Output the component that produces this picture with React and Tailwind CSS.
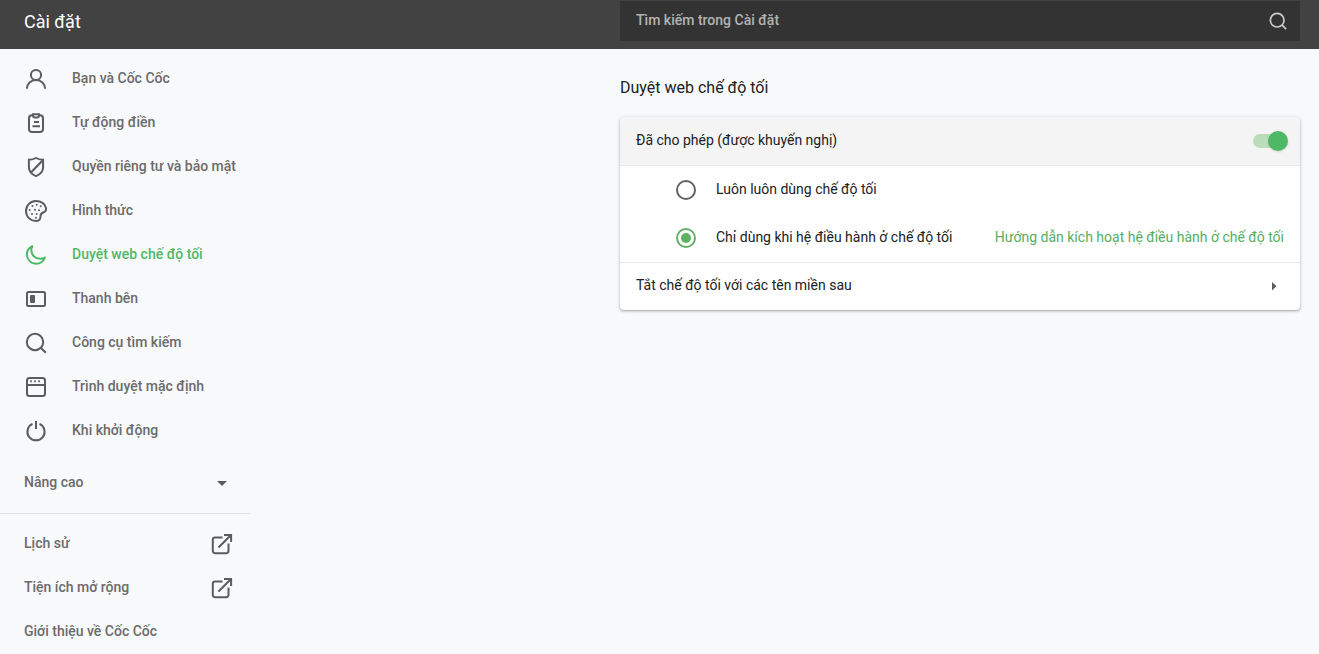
import React, { useState } from 'react';

const Icon = ({ children, size = 24, className = '' }) => (
    <svg
        width={size}
        height={size}
        viewBox="0 0 24 24"
        fill="none"
        stroke="currentColor"
        strokeWidth="2"
        className={`shrink-0 ${className}`}
        aria-hidden="true"
    >
        {children}
    </svg>
);

const UserIcon = () => (
    <Icon>
        <circle cx="12" cy="8" r="5.1" />
        <path d="M2.9 21.8C3 16.5 7 13.1 12 13.1s9 3.4 9.1 8.7" />
    </Icon>
);

const ClipboardIcon = () => (
    <Icon>
        <path d="M8.5 4.2H8a3 3 0 0 0-3 3V18a3 3 0 0 0 3 3h8a3 3 0 0 0 3-3V7.2a3 3 0 0 0-3-3h-.5" />
        <path d="M9 3.2h6v1.3a2 2 0 0 1-2 2h-2a2 2 0 0 1-2-2z" />
        <path d="M10 11h5M8.5 15.2h7.5" />
    </Icon>
);

const ShieldIcon = () => (
    <Icon>
        <path d="M12 3c2 1.2 4.5 1.700 7.100 1.800V12c0 4.300-2.900 7.400-7.100 9.100C7.800 19.400 4.900 16.300 4.900 12V4.800C7.500 4.700 10 4.200 12 3z" />
        <path d="M18.300 5.700 7.200 17.300" />
    </Icon>
);

const PaletteIcon = () => (
    <Icon>
        <path d="M22 8.900c.4 2.300-.8 3.900-2.700 4.600-2.100.8-3 1.800-2.800 3.900.2 2.500-1.300 4.500-4 4.700C6.800 22.400 2 17.900 2 12.100 2 6.400 6.400 2 12 2c5 0 9.200 2.800 10 6.900z" />
        <g fill="currentColor" stroke="none">
            <circle cx="8.5" cy="7" r="1" />
            <circle cx="12.7" cy="5.7" r="1" />
            <circle cx="16.7" cy="7.3" r="1" />
            <circle cx="5.7" cy="11" r="1" />
            <circle cx="11" cy="10.7" r="1" />
            <circle cx="15" cy="11.3" r="1" />
            <circle cx="8" cy="15" r="1" />
            <circle cx="12.7" cy="15" r="1" />
            <circle cx="12" cy="18.7" r="1" />
        </g>
    </Icon>
);

const MoonIcon = () => (
    <Icon>
        <path d="M8.300 3.200C4.800 4.900 2.900 8 2.900 11.600c0 5.100 4 9.200 9.200 9.200 4 0 7.300-2.500 8.800-6.300-1.500.9-3 1.200-4.600 1.200-5.400 0-9-3.700-9-8.600 0-1.400.3-2.700 1-3.900z" strokeLinejoin="round" />
    </Icon>
);

const SidebarIcon = () => (
    <Icon>
        <rect x="3" y="5" width="18" height="14" rx="1.5" />
        <rect x="6" y="8" width="5" height="8" rx="1" fill="currentColor" stroke="none" />
    </Icon>
);

const SearchIcon = ({ size, className }) => (
    <Icon size={size} className={className}>
        <circle cx="11" cy="11" r="8.2" />
        <path d="m17 17 4.800 4.800" />
    </Icon>
);

const BrowserIcon = () => (
    <Icon>
        <rect x="3" y="3" width="18" height="18" rx="2.5" />
        <path d="M3 10h18" />
        <path d="M6.200 6.300h1.600M10.200 6.300h1.600M14.200 6.300h1.600" />
    </Icon>
);

const PowerIcon = () => (
    <Icon>
        <path d="M8.500 4.900a8.600 8.600 0 1 0 7 0" />
        <path d="M12 2v8" />
    </Icon>
);

const ExternalIcon = () => (
    <Icon>
        <path d="M12.500 5.500H5a2.200 2.200 0 0 0-2.200 2.200V19A2.200 2.200 0 0 0 5 21.200h11.300a2.200 2.200 0 0 0 2.200-2.200v-7.500" />
        <path d="M8.500 15.500 21 3M14 2.900h7.100V10" />
    </Icon>
);

const menuItems = [
    { label: 'Bạn và Cốc Cốc', icon: UserIcon },
    { label: 'Tự động điền', icon: ClipboardIcon },
    { label: 'Quyền riêng tư và bảo mật', icon: ShieldIcon },
    { label: 'Hình thức', icon: PaletteIcon },
    { label: 'Duyệt web chế độ tối', icon: MoonIcon },
    { label: 'Thanh bên', icon: SidebarIcon },
    { label: 'Công cụ tìm kiếm', icon: SearchIcon },
    { label: 'Trình duyệt mặc định', icon: BrowserIcon },
    { label: 'Khi khởi động', icon: PowerIcon },
];

const footerItems = [
    { label: 'Lịch sử', external: true },
    { label: 'Tiện ích mở rộng', external: true },
    { label: 'Giới thiệu về Cốc Cốc', external: false },
];

const Header = () => (
    <header className="flex items-start bg-[#424242] text-white">
        <h1 className="flex h-[49px] flex-1 items-center pb-1.5 pl-6 text-lg">Cài đặt</h1>
        <div className="mt-px mr-[19px] flex h-10 w-full max-w-[680px] items-center bg-[#333333] pr-3 pl-4">
            <input
                type="search"
                aria-label="Tìm kiếm trong Cài đặt"
                placeholder="Tìm kiếm trong Cài đặt"
                className="min-w-0 flex-1 bg-transparent pb-0.5 text-sm font-medium outline-none placeholder:text-[#b3b3b3]"
            />
            <button type="button" aria-label="Tìm kiếm" className="text-[#cccccc]">
                <SearchIcon size={20} />
            </button>
        </div>
    </header>
);

const Sidebar = ({ active, onSelect }) => (
    <nav className="w-[250px] shrink-0 text-sm font-medium text-[#6b6b6b]">
        <ul className="py-2">
            {menuItems.map(({ label, icon: ItemIcon }) => (
                <li key={label}>
                    <a
                        href="#"
                        onClick={() => onSelect(label)}
                        className={`flex h-11 items-center gap-6 pl-6 ${active === label ? 'text-[#4fb866]' : ''}`}
                    >
                        <span className={active === label ? 'text-[#4fb866]' : 'text-[#5a5c60]'}>
                            <ItemIcon />
                        </span>
                        <span className="pb-0.5 whitespace-nowrap">{label}</span>
                    </a>
                </li>
            ))}
        </ul>
        <button type="button" className="mb-2 flex h-11 w-full items-center justify-between pr-4 pl-6">
            <span className="pb-0.5">Nâng cao</span>
            <Icon className="text-[#5a5c60]">
                <path d="M7 10h10l-5 5z" fill="currentColor" stroke="none" />
            </Icon>
        </button>
        <ul className="border-t border-[#dfe1e4] pt-2">
            {footerItems.map(({ label, external }) => (
                <li key={label}>
                    <a href="#" className="flex h-11 items-center justify-between pr-4 pl-6">
                        <span className="pb-0.5">{label}</span>
                        {external && <span className="text-[#5a5c60]"><ExternalIcon /></span>}
                    </a>
                </li>
            ))}
        </ul>
    </nav>
);

const RadioRow = ({ value, label, mode, onChange, children }) => (
    <div className="flex h-12 items-center justify-between pr-4 pl-14">
        <label className="flex items-center gap-5">
            <input
                type="radio"
                name="dark-mode"
                checked={mode === value}
                onChange={() => onChange(value)}
                className="flex size-5 appearance-none items-center justify-center rounded-full border-2 border-[#5f6368] checked:border-[#66b06a] checked:before:size-2.5 checked:before:rounded-full checked:before:bg-[#5cb360]"
            />
            <span className="pb-0.5">{label}</span>
        </label>
        {children}
    </div>
);

const App = () => {
    const [active, setActive] = useState('Duyệt web chế độ tối');
    const [enabled, setEnabled] = useState(true);
    const [mode, setMode] = useState('system');

    return (
        <div className="flex h-screen flex-col overflow-hidden bg-[#f8f9fb] font-['Roboto',sans-serif]">
            <Header />
            <div className="flex min-h-0 flex-1 justify-between">
                <Sidebar active={active} onSelect={setActive} />
                <main className="mr-[19px] w-full max-w-[680px] text-sm text-[#202124]">
                    <h2 className="flex h-[68px] items-center pt-2.5 text-base">Duyệt web chế độ tối</h2>
                    <section className="overflow-hidden rounded-sm bg-white shadow-[0_1px_2px_rgba(60,64,67,0.3),0_1px_3px_1px_rgba(60,64,67,0.15)]">
                        <label className="flex h-12 items-center justify-between bg-[#f4f4f4] pr-[13px] pl-4">
                            <span className="pb-0.5">Đã cho phép (được khuyến nghị)</span>
                            <input
                                type="checkbox"
                                role="switch"
                                checked={enabled}
                                onChange={(e) => setEnabled(e.target.checked)}
                                className="flex h-3.5 w-[34px] appearance-none items-center rounded-full bg-[#bdc1c6] before:size-5 before:shrink-0 before:rounded-full before:bg-white before:shadow checked:justify-end checked:bg-[#bcddba] checked:before:-mr-px checked:before:bg-[#4fb866]"
                            />
                        </label>
                        <div className="border-y border-[#e8e8e8]">
                            <RadioRow value="always" label="Luôn luôn dùng chế độ tối" mode={mode} onChange={setMode} />
                            <RadioRow value="system" label="Chỉ dùng khi hệ điều hành ở chế độ tối" mode={mode} onChange={setMode}>
                                <a href="#" className="pb-0.5 text-[#55ae5f]">Hướng dẫn kích hoạt hệ điều hành ở chế độ tối</a>
                            </RadioRow>
                        </div>
                        <button type="button" className="flex h-[47px] w-full items-center justify-between pr-3.5 pb-0.5 pl-4">
                            <span className="pb-0.5">Tắt chế độ tối với các tên miền sau</span>
                            <Icon className="text-[#5a5c60]">
                                <path d="m10 8 4.500 4.200L10 16.400z" fill="currentColor" stroke="none" />
                            </Icon>
                        </button>
                    </section>
                </main>
            </div>
        </div>
    );
};

export default App;
